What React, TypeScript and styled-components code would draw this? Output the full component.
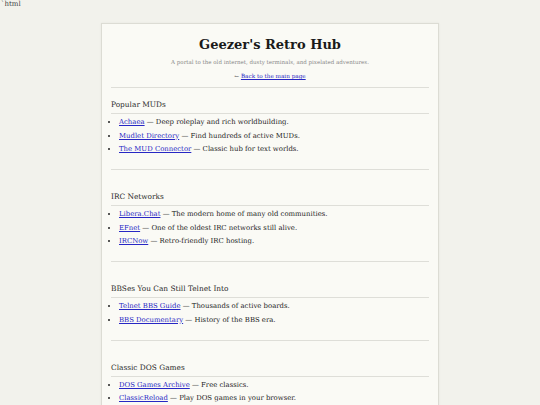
import React from 'react'
import styled, { createGlobalStyle } from 'styled-components'

interface Link {
  name: string
  note: string
}

interface Section {
  title: string
  links: Link[]
}

const sections: Section[] = [
  {
    title: 'Popular MUDs',
    links: [
      { name: 'Achaea', note: 'Deep roleplay and rich worldbuilding.' },
      { name: 'Mudlet Directory', note: 'Find hundreds of active MUDs.' },
      { name: 'The MUD Connector', note: 'Classic hub for text worlds.' },
    ],
  },
  {
    title: 'IRC Networks',
    links: [
      { name: 'Libera.Chat', note: 'The modern home of many old communities.' },
      { name: 'EFnet', note: 'One of the oldest IRC networks still alive.' },
      { name: 'IRCNow', note: 'Retro-friendly IRC hosting.' },
    ],
  },
  {
    title: 'BBSes You Can Still Telnet Into',
    links: [
      { name: 'Telnet BBS Guide', note: 'Thousands of active boards.' },
      { name: 'BBS Documentary', note: 'History of the BBS era.' },
    ],
  },
  {
    title: 'Classic DOS Games',
    links: [
      { name: 'DOS Games Archive', note: 'Free classics.' },
      { name: 'ClassicReload', note: 'Play DOS games in your browser.' },
    ],
  },
]

const GlobalStyle = createGlobalStyle`
  html, body {
    margin: 0;
    padding: 0;
    background: #f2f2ec;
    font-family: "DejaVu Serif", "Liberation Serif", serif;
    color: #222;
  }
`

const Stray = styled.div`
  padding: 0 0 0 1px;
  font-size: 7px;
  line-height: 9px;
  color: #444;
`

const Page = styled.main`
  width: 338px;
  box-sizing: border-box;
  margin: 14px auto 0;
  padding: 12px 9px 20px;
  background: #fafaf5;
  border: 1px solid #dcdcd4;
  box-shadow: 0 0 2px rgba(0, 0, 0, 0.06);
`

const Header = styled.header`
  text-align: center;
`

const Title = styled.h1`
  margin: 0;
  font-size: 13px;
  line-height: 18px;
  font-weight: bold;
  color: #1a1a1a;
`

const Tagline = styled.p`
  margin: 3px 0 0;
  font-size: 5.5px;
  line-height: 10px;
  color: #888;
`

const Back = styled.p`
  margin: 4px 0 0;
  font-size: 5.7px;
  line-height: 10px;
  color: #555;
`

const Anchor = styled.a`
  color: #2727c4;
  text-decoration: underline;
`

const Rule = styled.hr<{ $top: number; $bottom: number }>`
  border: 0;
  border-top: 1px solid #deded8;
  margin: ${p => p.$top}px 0 ${p => p.$bottom}px;
`

const Heading = styled.h2`
  margin: 0;
  padding-bottom: 2px;
  border-bottom: 1px solid #deded8;
  font-size: 7.4px;
  line-height: 12px;
  font-weight: normal;
  color: #2a2a2a;
`

const List = styled.ul`
  margin: 3px 0 0;
  padding-left: 8px;
`

const Item = styled.li`
  font-size: 6.9px;
  line-height: 10px;
  color: #222;
  & + & {
    margin-top: 3.5px;
  }
`

const App: React.FC = () => {
  return (
    <>
      <GlobalStyle />
      <Stray>`html</Stray>
      <Page>
        <Header>
          <Title>Geezer's Retro Hub</Title>
          <Tagline>
            A portal to the old internet, dusty terminals, and pixelated
            adventures.
          </Tagline>
          <Back>
            ← <Anchor href="#">Back to the main page</Anchor>
          </Back>
        </Header>
        <Rule $top={6} $bottom={11} />
        {sections.map((section, i) => (
          <section key={section.title}>
            <Heading>{section.title}</Heading>
            <List>
              {section.links.map(link => (
                <Item key={link.name}>
                  <Anchor href="#">{link.name}</Anchor> — {link.note}
                </Item>
              ))}
            </List>
            {i < sections.length - 1 && <Rule $top={15} $bottom={21} />}
          </section>
        ))}
      </Page>
    </>
  )
}

export default App
